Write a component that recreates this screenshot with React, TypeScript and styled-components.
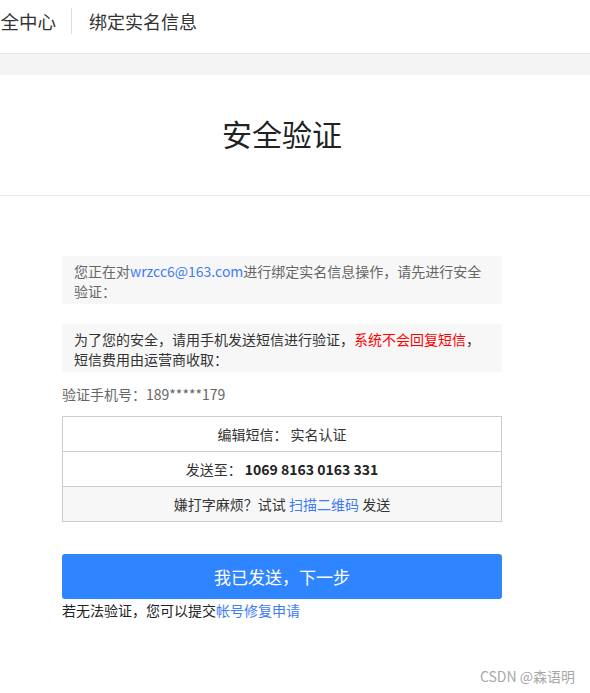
import styled, { createGlobalStyle } from "styled-components";

const GlobalStyle = createGlobalStyle`
  * { box-sizing: border-box; }
  body {
    margin: 0;
    background: #fff;
    font-family: "Noto Sans CJK SC", "Liberation Sans", sans-serif;
    color: #333;
    overflow: hidden;
  }
`

const App = () => {
  return (
    <>
      <GlobalStyle />
      <Header>
        <HeaderRow>
          <Logo>安全中心</Logo>
          <Divider />
          <HeaderTitle>绑定实名信息</HeaderTitle>
        </HeaderRow>
      </Header>
      <GrayBand />
      <TitleSection>
        <Inner>
          <Title>安全验证</Title>
        </Inner>
      </TitleSection>
      <Inner>
        <Content>
          <Notice tone="muted">
            您正在对<Link>wrzcc6@163.com</Link>进行绑定实名信息操作，请先进行安全验证：
          </Notice>
          <Notice tone="dark">
            为了您的安全，请用手机发送短信进行验证，<Warn>系统不会回复短信</Warn>，短信费用由运营商收取：
          </Notice>
          <PhoneLine>验证手机号：189*****179</PhoneLine>
          <SmsTable>
            <SmsRow>编辑短信： 实名认证</SmsRow>
            <SmsRow>发送至： <Strong>1069 8163 0163 331</Strong></SmsRow>
            <SmsRow shaded>嫌打字麻烦？试试 <Link>扫描二维码</Link> 发送</SmsRow>
          </SmsTable>
          <SubmitButton type="button">我已发送，下一步</SubmitButton>
          <Footnote>若无法验证，您可以提交<Link>帐号修复申请</Link></Footnote>
        </Content>
      </Inner>
      <Watermark>CSDN @森语明</Watermark>
    </>
  );
}

export default App;

const Header = styled.header`
  height: 54px;
  padding-top: 8px;
  border-bottom: 1px solid #e6e6e6;
  background: #fff;
`
const HeaderRow = styled.div`
  display: flex;
  align-items: center;
  height: 26px;
  margin-left: -18px;
`
const Logo = styled.div`
  font-size: 18.5px;
  color: #333;
  line-height: 24px;
  margin-top: -1px;
`
const Divider = styled.span`
  width: 1px;
  height: 26px;
  background: #ddd;
  margin: 0 19px 0 15px;
`
const HeaderTitle = styled.div`
  font-size: 18px;
  line-height: 24px;
  color: #333;
  margin-top: -1px;
  margin-left: -2px;
`
const GrayBand = styled.div`
  height: 21px;
  background: #f4f4f4;
`
const TitleSection = styled.section`
  height: 121px;
  border-bottom: 1px solid #ebebeb;
  display: flex;
  align-items: center;
`
const Inner = styled.div`
  width: 564px;
`
const Title = styled.h1`
  margin: 0;
  text-align: center;
  font-size: 30px;
  font-weight: 400;
  line-height: 40px;
  color: #222;
  margin-top: -4px;
`
const Content = styled.div`
  width: 440px;
  margin: 60px auto 0;
  display: flex;
  flex-direction: column;
`

interface NoticeProps {
  tone: "muted" | "dark",
}

const Notice = styled.div<NoticeProps>`
  background: #f7f7f7;
  padding: 5px 14px 3px 12px;
  font-size: 14px;
  line-height: 20px;
  color: ${(props) => props.tone === "muted" ? "#666" : "#333"};
  margin-bottom: ${(props) => props.tone === "muted" ? "20px" : "12px"};
`
const Link = styled.a`
  color: #3d7cf7;
  text-decoration: none;
  cursor: pointer;
`
const Warn = styled.span`
  color: #f00;
`
const PhoneLine = styled.div`
  font-size: 14px;
  line-height: 20px;
  color: #666;
  margin-bottom: 12px;
`
const SmsTable = styled.div`
  border: 1px solid #ccc;
  display: flex;
  flex-direction: column;
`

interface RowProps {
  shaded?: boolean,
}

const SmsRow = styled.div<RowProps>`
  height: 35px;
  display: flex;
  align-items: center;
  justify-content: center;
  white-space: pre;
  font-size: 14px;
  color: #333;
  background: ${(props) => props.shaded ? "#f7f7f7" : "#fff"};
  & + & {
    border-top: 1px solid #ccc;
  }
  &:first-child {
    height: 34px;
  }
`
const Strong = styled.b`
  font-weight: 700;
  color: #222;
`
const SubmitButton = styled.button`
  all: unset;
  box-sizing: border-box;
  margin-top: 32px;
  height: 45px;
  background: #2f84ff;
  border-radius: 3px;
  color: #fff;
  font-size: 17px;
  text-align: center;
  line-height: 45px;
  font-family: inherit;
  cursor: pointer;
`
const Footnote = styled.div`
  font-size: 14px;
  line-height: 20px;
  color: #222;
  margin-top: 1px;
`
const Watermark = styled.div`
  position: absolute;
  right: 15px;
  top: 666px;
  font-size: 14px;
  line-height: 20px;
  color: #a8a8a8;
`
